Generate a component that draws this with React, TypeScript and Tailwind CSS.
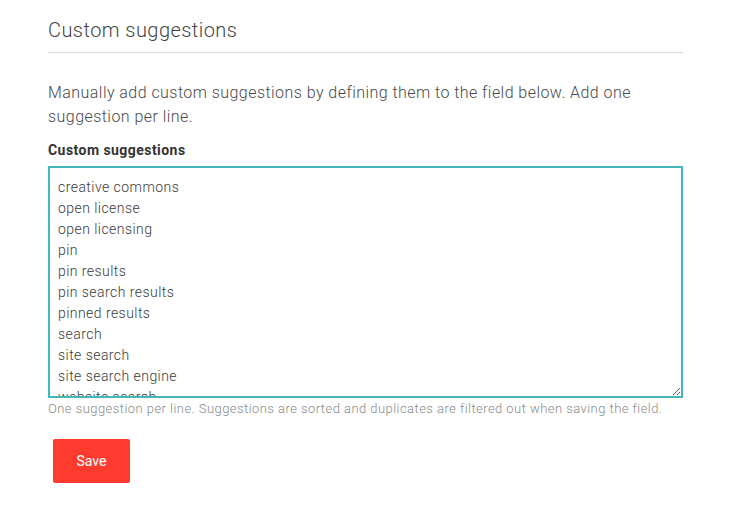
import React from "react";

const suggestions = [
  "creative commons",
  "open license",
  "open licensing",
  "pin",
  "pin results",
  "pin search results",
  "pinned results",
  "search",
  "site search",
  "site search engine",
  "website search",
  "wordpress search",
];

export default function App() {
  return (
    <div className="min-h-screen bg-white font-['Roboto',sans-serif] tracking-[0.45px]">
      <div className="ml-[48px] w-[635px] pt-[16px]">
        <h2 className="border-b border-[#dcdcdc] pb-[8px] text-[20px] font-light leading-[28px] text-[#444]">
          Custom suggestions
        </h2>
        <p className="mt-[28px] text-[16px] font-light leading-[24px] text-[#4a4a4a]">
          Manually add custom suggestions by defining them to the field below. Add one suggestion per line.
        </p>
        <label className="mt-[11px] block text-[14px] font-bold leading-[20px] text-[#333]">
          Custom suggestions
        </label>
        <textarea
          defaultValue={suggestions.join("\n")}
          className="mt-[6px] block h-[232px] w-full resize-y border-2 border-[#44b8bb] px-[8px] pt-[9px] pb-[8px] text-[14px] font-light leading-[21px] text-[#3a3a3a] outline-none"
        />
        <p className="mt-[3px] text-[13px] font-light leading-[16px] text-[#8a8a8a]">
          One suggestion per line. Suggestions are sorted and duplicates are filtered out when saving the field.
        </p>
        <button
          type="button"
          className="ml-[5px] mt-[22px] h-[44px] w-[77px] rounded-[2px] bg-[#ff3b30] text-[14px] tracking-normal text-white"
        >
          Save
        </button>
      </div>
    </div>
  );
}
